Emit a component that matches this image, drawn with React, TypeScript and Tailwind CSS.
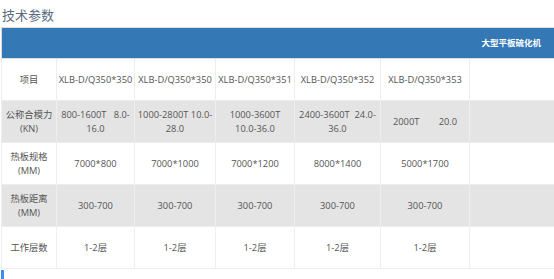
export default function App() {
    const font = { fontFamily: '"Open Sans", "Noto Sans CJK SC", sans-serif' };
    const cell = "border border-[#eeeeee] text-center align-middle px-0 leading-[14px] whitespace-nowrap";
    const rows: { bg: boolean; cells: React.ReactNode[] }[] = [
        {
            bg: false,
            cells: ["项目", "XLB-D/Q350*350", "XLB-D/Q350*350", "XLB-D/Q350*351", "XLB-D/Q350*352", "XLB-D/Q350*353", ""],
        },
        {
            bg: true,
            cells: [
                <>公称合模力<br />(KN)</>,
                <>800-1600T&nbsp;&nbsp;&nbsp;8.0-<br />16.0</>,
                <>1000-2800T 10.0-<br />28.0</>,
                <>1000-3600T<br />10.0-36.0</>,
                <>2400-3600T&nbsp;&nbsp;24.0-<br />36.0</>,
                <>2000T&nbsp;&nbsp;&nbsp;&nbsp;&nbsp;&nbsp;&nbsp;&nbsp;20.0</>,
                "",
            ],
        },
        {
            bg: false,
            cells: [<>热板规格<br />(MM)</>, "7000*800", "7000*1000", "7000*1200", "8000*1400", "5000*1700", ""],
        },
        {
            bg: true,
            cells: [<>热板距离<br />(MM)</>, "300-700", "300-700", "300-700", "300-700", "300-700", ""],
        },
        {
            bg: false,
            cells: ["工作层数", "1-2层", "1-2层", "1-2层", "1-2层", "1-2层", ""],
        },
    ];
    const widths = ["w-[55px]", "w-[78px]", "w-[81px]", "w-[79px]", "w-[86px]", "w-[89px]", "w-[100px]"];
    return (
        <div className="w-[554px] h-[279px] overflow-hidden bg-white text-[#555555]" style={font}>
            <div className="pl-[2px] pt-[6px] h-[27px] text-[13px] leading-[18px] text-[#5a6b7d]">技术参数</div>
            <div className="pl-[1px]">
                <table className="border-collapse w-[568px] table-fixed text-[9.3px]">
                    <colgroup>
                        {widths.map((w, i) => <col key={i} className={w} />)}
                    </colgroup>
                    <tbody>
                        <tr className="h-[31px]">
                            <td colSpan={7} className="bg-[#3479b6] border border-[#dddddd] text-right pr-[28px] text-white font-bold text-[8.5px]">
                                大型平板硫化机
                            </td>
                        </tr>
                        {rows.map((r, i) => (
                            <tr key={i} className={`h-[42px] ${r.bg ? "bg-[#e4e4e4]" : "bg-white"}`}>
                                {r.cells.map((c, j) => (
                                    <td key={j} className={`${cell} ${r.bg ? "border-[#e4e4e4]" : ""}`}>{c}</td>
                                ))}
                            </tr>
                        ))}
                    </tbody>
                </table>
            </div>
            <div className="ml-[1px] mt-[1px] w-[3px] h-[12px] bg-[#3b8ef0]" />
        </div>
    );
}
